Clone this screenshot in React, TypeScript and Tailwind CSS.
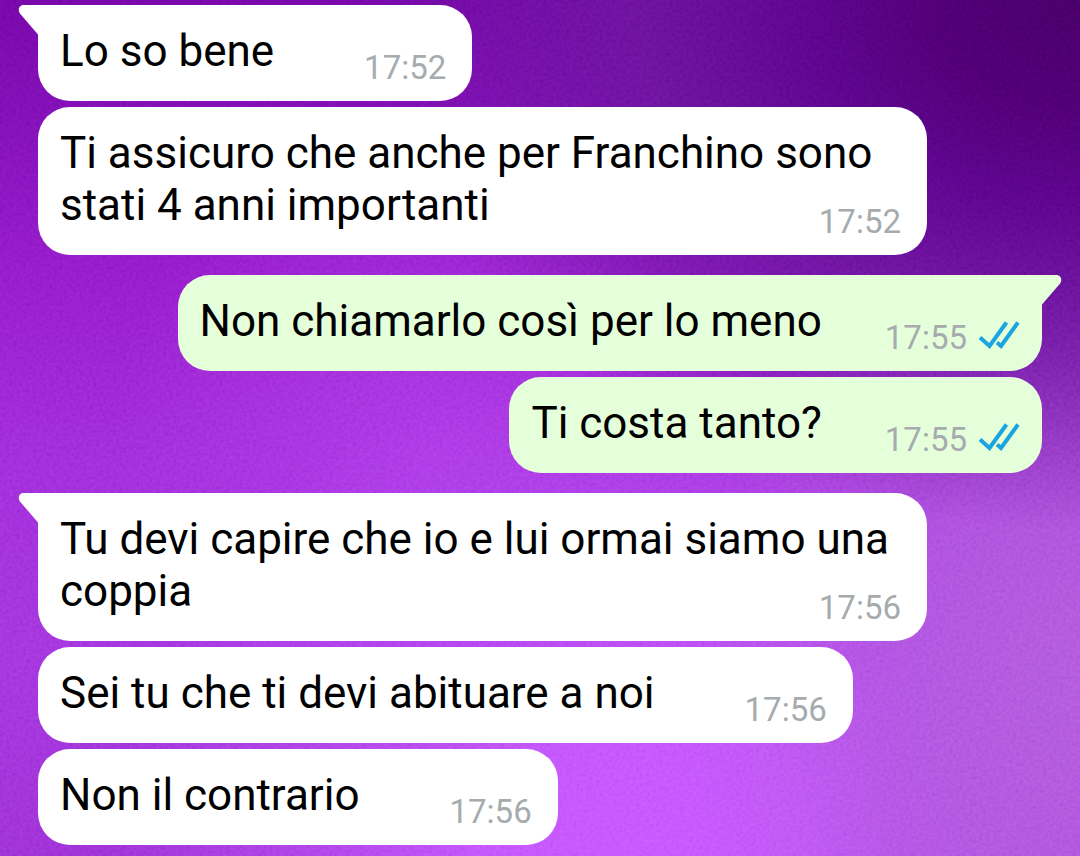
import React from 'react';
import { clsx } from 'clsx';

type Message = {
  text: string;
  time: string;
};

type MessageGroup = {
  id: string;
  outgoing: boolean;
  messages: Message[];
};

const groups: MessageGroup[] = [{
  id: 'g1',
  outgoing: false,
  messages: [
    { text: 'Lo so bene', time: '17:52' },
    { text: 'Ti assicuro che anche per Franchino sono stati 4 anni importanti', time: '17:52' },
  ]
}, {
  id: 'g2',
  outgoing: true,
  messages: [
    { text: 'Non chiamarlo così per lo meno', time: '17:55' },
    { text: 'Ti costa tanto?', time: '17:55' },
  ]
}, {
  id: 'g3',
  outgoing: false,
  messages: [
    { text: 'Tu devi capire che io e lui ormai siamo una coppia', time: '17:56' },
    { text: 'Sei tu che ti devi abituare a noi', time: '17:56' },
    { text: 'Non il contrario', time: '17:56' },
  ]
}];

function Wallpaper() {
  return <div aria-hidden="true" className="absolute inset-0 -z-10 bg-[#9a20d2]">
    <div className="absolute inset-0 bg-[linear-gradient(180deg,#7206a6_0%,#800eb8_16%,#9418cb_33%,#9e28d9_54%,#a230de_78%,#9c2cd6_100%)]" />
    <div className="absolute inset-0 bg-[radial-gradient(ellipse_50%_58%_at_60%_100%,#c652ff_0%,#c250fc_30%,#b648f0b3_60%,#a83be200_100%)]" />
    <div className="absolute inset-0 bg-[radial-gradient(ellipse_30%_40%_at_40%_54%,#b03aeca6_0%,#b03aec00_100%)]" />
    <div className="absolute inset-0 bg-[radial-gradient(ellipse_36%_70%_at_100%_80%,#b25cdcd9_0%,#b058dcb3_40%,#a84cd600_100%)]" />
    <div className="absolute inset-0 bg-[radial-gradient(ellipse_66%_62%_at_100%_0%,#420064_0%,#4a0070_20%,#57048a_38%,#66109ad9_62%,#7a18b000_100%)]" />
    <svg className="absolute inset-0 size-full opacity-30 mix-blend-soft-light">
      <filter id="grain">
        <feTurbulence type="fractalNoise" baseFrequency="0.3" numOctaves="2" />
        <feColorMatrix type="matrix" values="1 0 0 0 0 1 0 0 0 0 1 0 0 0 0 0 0 0 0 1" />
      </filter>
      <rect width="100%" height="100%" filter="url(#grain)" />
    </svg>
  </div>;
}

function Tail({ outgoing }: { outgoing: boolean }) {
  return <svg
    aria-hidden="true"
    viewBox="0 0 21 30"
    className={clsx('absolute top-0 h-[30px] w-[21px]', outgoing ? '-right-5 -scale-x-100 fill-[#e6ffdb]' : '-left-5 fill-white')}
  >
    <path d="M21 0H5.500C1.200 0-.6 5 1.900 8.400L20 29.500H21Z" />
  </svg>;
}

function ReadTicks() {
  return <svg aria-label="Letto" role="img" viewBox="0 0 42 28" className="mb-1.5 h-7 w-[42px]" fill="none" stroke="#1ba5e0" strokeWidth="4">
    <path d="M1 16.500L10.500 25L27.500 1.500" />
    <path d="M18 21.500L22 25L39 1.500" />
  </svg>;
}

function Bubble({ message, outgoing, first }: { message: Message; outgoing: boolean; first: boolean }) {
  return <li
    className={clsx(
      'relative flow-root w-fit max-w-[889px] rounded-[32px] pt-5 pb-[13px] pl-[22px] text-[44px] leading-[52px] text-black',
      outgoing ? 'self-end bg-[#e6ffdb] pr-[21px]' : 'bg-white pr-[26px]',
      first && (outgoing ? 'rounded-tr-none' : 'rounded-tl-none')
    )}
  >
    {first && <Tail outgoing={outgoing} />}
    {message.text}
    {/* floats next to the last line of the text */}
    <span className={clsx('float-right mt-[23px] flex h-10 items-center gap-3', outgoing ? 'ml-[63px]' : 'ml-[90px]')}>
      <time className="text-[33px] leading-10 text-[#a6abae]">{message.time}</time>
      {outgoing && <ReadTicks />}
    </span>
  </li>;
}

export default function App() {
  return <main className="relative isolate min-h-screen overflow-hidden px-[38px] pt-[5px] pb-[11px] font-['Roboto',sans-serif]">
    <Wallpaper />
    <div className="flex flex-col gap-5">
      {groups.map(group => <ul key={group.id} className="flex flex-col gap-1.5">
        {group.messages.map((message, i) => <Bubble key={message.text} message={message} outgoing={group.outgoing} first={i === 0} />)}
      </ul>)}
    </div>
  </main>;
}
